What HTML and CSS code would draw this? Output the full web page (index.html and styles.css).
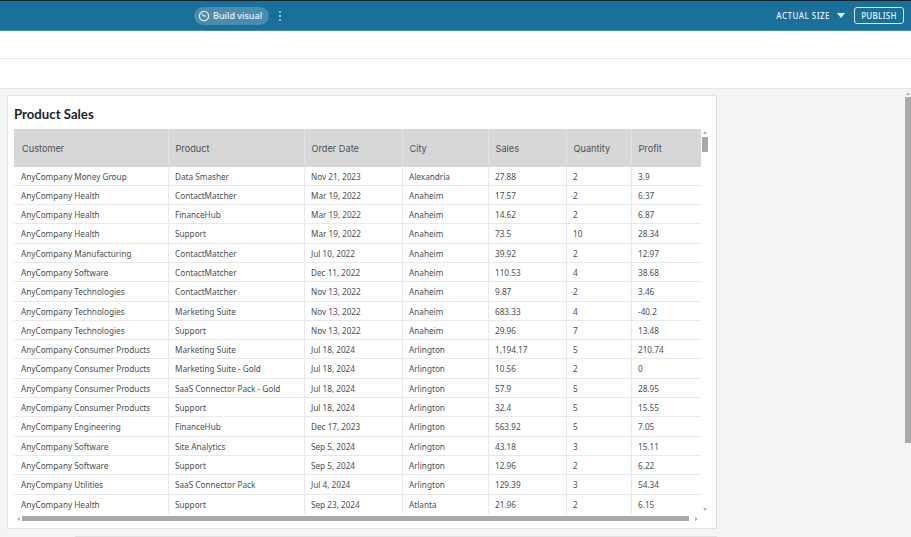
FILE: index.html
```html
<!DOCTYPE html>
<html lang="en">
<head>
<meta charset="utf-8">
<title>Product Sales</title>
<link rel="stylesheet" href="styles.css">
</head>
<body>
<header class="topbar">
  <div class="topbar-center">
    <button class="build-btn">
      <svg class="build-icon" viewBox="0 0 12 12" width="12" height="12"><circle cx="6" cy="6" r="4.6" fill="none" stroke="#e6f1f6" stroke-width="1.3"/><path d="M3.6 3.6 L6.2 6.2 L8 6" fill="none" stroke="#e6f1f6" stroke-width="1.2"/></svg>
      <span>Build visual</span>
    </button>
    <svg class="kebab" viewBox="0 0 4 12" width="4" height="12"><circle cx="2" cy="2" r="1" fill="#b9d6e3"/><circle cx="2" cy="6" r="1" fill="#b9d6e3"/><circle cx="2" cy="10" r="1" fill="#b9d6e3"/></svg>
  </div>
  <div class="topbar-right">
    <span class="size-label">ACTUAL SIZE</span>
    <svg class="caret" viewBox="0 0 8 5" width="8" height="5"><path d="M0 0H8L4 5Z" fill="#eef5f8"/></svg>
    <button class="publish">PUBLISH</button>
  </div>
</header>
<div class="band band-one"></div>
<div class="band band-two"></div>
<main class="canvas">
  <section class="card">
    <h1 class="title">Product Sales</h1>
    <div class="table">
      <div class="row head"><div>Customer</div><div>Product</div><div>Order Date</div><div>City</div><div>Sales</div><div>Quantity</div><div>Profit</div></div>
      <div class="row"><div>AnyCompany Money Group</div><div>Data Smasher</div><div>Nov 21, 2023</div><div>Alexandria</div><div>27.88</div><div>2</div><div>3.9</div></div>
      <div class="row"><div>AnyCompany Health</div><div>ContactMatcher</div><div>Mar 19, 2022</div><div>Anaheim</div><div>17.57</div><div>2</div><div>6.37</div></div>
      <div class="row"><div>AnyCompany Health</div><div>FinanceHub</div><div>Mar 19, 2022</div><div>Anaheim</div><div>14.62</div><div>2</div><div>6.87</div></div>
      <div class="row"><div>AnyCompany Health</div><div>Support</div><div>Mar 19, 2022</div><div>Anaheim</div><div>73.5</div><div>10</div><div>28.34</div></div>
      <div class="row"><div>AnyCompany Manufacturing</div><div>ContactMatcher</div><div>Jul 10, 2022</div><div>Anaheim</div><div>39.92</div><div>2</div><div>12.97</div></div>
      <div class="row"><div>AnyCompany Software</div><div>ContactMatcher</div><div>Dec 11, 2022</div><div>Anaheim</div><div>110.53</div><div>4</div><div>38.68</div></div>
      <div class="row"><div>AnyCompany Technologies</div><div>ContactMatcher</div><div>Nov 13, 2022</div><div>Anaheim</div><div>9.87</div><div>2</div><div>3.46</div></div>
      <div class="row"><div>AnyCompany Technologies</div><div>Marketing Suite</div><div>Nov 13, 2022</div><div>Anaheim</div><div>683.33</div><div>4</div><div>-40.2</div></div>
      <div class="row"><div>AnyCompany Technologies</div><div>Support</div><div>Nov 13, 2022</div><div>Anaheim</div><div>29.96</div><div>7</div><div>13.48</div></div>
      <div class="row"><div>AnyCompany Consumer Products</div><div>Marketing Suite</div><div>Jul 18, 2024</div><div>Arlington</div><div>1,194.17</div><div>5</div><div>210.74</div></div>
      <div class="row"><div>AnyCompany Consumer Products</div><div>Marketing Suite - Gold</div><div>Jul 18, 2024</div><div>Arlington</div><div>10.56</div><div>2</div><div>0</div></div>
      <div class="row"><div>AnyCompany Consumer Products</div><div>SaaS Connector Pack - Gold</div><div>Jul 18, 2024</div><div>Arlington</div><div>57.9</div><div>5</div><div>28.95</div></div>
      <div class="row"><div>AnyCompany Consumer Products</div><div>Support</div><div>Jul 18, 2024</div><div>Arlington</div><div>32.4</div><div>5</div><div>15.55</div></div>
      <div class="row"><div>AnyCompany Engineering</div><div>FinanceHub</div><div>Dec 17, 2023</div><div>Arlington</div><div>563.92</div><div>5</div><div>7.05</div></div>
      <div class="row"><div>AnyCompany Software</div><div>Site Analytics</div><div>Sep 5, 2024</div><div>Arlington</div><div>43.18</div><div>3</div><div>15.11</div></div>
      <div class="row"><div>AnyCompany Software</div><div>Support</div><div>Sep 5, 2024</div><div>Arlington</div><div>12.96</div><div>2</div><div>6.22</div></div>
      <div class="row"><div>AnyCompany Utilities</div><div>SaaS Connector Pack</div><div>Jul 4, 2024</div><div>Arlington</div><div>129.39</div><div>3</div><div>54.34</div></div>
      <div class="row last"><div>AnyCompany Health</div><div>Support</div><div>Sep 23, 2024</div><div>Atlanta</div><div>21.96</div><div>2</div><div>6.15</div></div>
    </div>
    <div class="vscroll"><i class="arrow-up"></i><b></b><i class="arrow-down"></i></div>
    <div class="hscroll"><i class="arrow-left"></i><b></b><i class="arrow-right"></i></div>
  </section>
  <div class="next-card"></div>
  <div class="page-scroll"><i class="arrow-up"></i><b></b></div>
</main>
</body>
</html>
```
FILE: styles.css
```css
* { box-sizing: border-box; }
html, body { margin: 0; height: 100%; }
body {
  width: 911px;
  height: 537px;
  overflow: hidden;
  background: #f4f4f6;
  font-family: "Noto Sans", sans-serif;
  display: flex;
  flex-direction: column;
}
.topbar {
  flex: none;
  height: 31px;
  background: #19719b;
  border-top: 1px solid #14222c;
  border-bottom: 1px solid #3f8fb3;
  display: flex;
  align-items: center;
  justify-content: space-between;
  padding: 0 7px 0 194px;
  color: #eef5f8;
}
.topbar-center, .topbar-right { display: flex; align-items: center; }
.build-btn {
  height: 18px;
  width: 75px;
  padding: 0 0 0 4px;
  display: flex;
  align-items: center;
  gap: 3px;
  border: 0;
  border-radius: 9px;
  background: #4a8cad;
  color: #eef5f8;
  font: 500 9px "Noto Sans", sans-serif;
}
.kebab { margin-left: 9px; }
.size-label { font: 500 8px "Noto Sans", sans-serif; letter-spacing: .48px; }
.caret { margin: 0 9px 0 7px; }
.publish {
  width: 50px;
  height: 17px;
  padding: 0;
  border: 1px solid #d5e6ee;
  border-radius: 3px;
  background: transparent;
  color: #eef5f8;
  font: 500 8px "Noto Sans", sans-serif;
  letter-spacing: .3px;
}
.band { flex: none; background: #fff; border-bottom: 1px solid #e6e6e9; }
.band-one { height: 28px; }
.band-two { height: 30px; }
.canvas {
  flex: 1;
  position: relative;
  padding: 6px 0 0 7px;
  min-height: 0;
}
.card {
  position: relative;
  width: 710px;
  height: 434px;
  background: #fff;
  border: 1px solid #e2e2e5;
  padding: 0 0 0 6px;
}
.title {
  margin: 0;
  height: 33px;
  padding: 10px 0 0 0;
  font: 700 13.2px/17px Lato, sans-serif;
  color: #1b2530;
}
.table { width: 687px; height: 387px; overflow: hidden; }
.row {
  display: grid;
  grid-template-columns: 154px 136px 98px 86px 78px 65px 70px;
  height: 19.3px;
  border-bottom: 1px solid #e9e9ec;
  font-size: 8.2px;
  line-height: 19.4px;
  color: #4b4f55;
}
.row > div {
  padding-left: 6px;
  border-left: 1px solid #e9e9ec;
  white-space: nowrap;
  overflow: hidden;
}
.row > div:first-child { border-left: 0; padding-left: 7px; }
.row.last { border-bottom: 0; }
.row.head {
  height: 37.5px;
  background: #d7d7d8;
  border-bottom: 0;
  font-family: Inter, sans-serif;
  font-size: 9.2px;
  line-height: 39.5px;
  color: #4d5158;
}
.row.head > div { padding-left: 6.5px; border-left-color: #e2e2e4; }
.row.head > div:first-child { padding-left: 8px; }
.vscroll {
  position: absolute;
  left: 694px;
  top: 35px;
  width: 6px;
  height: 380px;
}
.vscroll b {
  position: absolute;
  left: 0;
  top: 6px;
  width: 6px;
  height: 15px;
  background: #a9a9a9;
}
.arrow-up, .arrow-down, .arrow-left, .arrow-right {
  position: absolute;
  width: 0;
  height: 0;
  border: 2px solid transparent;
}
.arrow-up { left: 1px; top: 0; border-top: 0; border-bottom: 3px solid #b0b0b0; }
.arrow-down { left: 1px; bottom: 0; border-bottom: 0; border-top: 3px solid #b0b0b0; }
.arrow-left { left: 0; top: 1px; border-left: 0; border-right: 3px solid #b0b0b0; }
.arrow-right { right: 0; top: 1px; border-right: 0; border-left: 3px solid #b0b0b0; }
.hscroll {
  position: absolute;
  left: 9px;
  top: 420px;
  width: 681px;
  height: 6px;
}
.hscroll b {
  position: absolute;
  left: 5px;
  top: 0;
  width: 667px;
  height: 5px;
  background: #a9a9a9;
}
.next-card {
  position: absolute;
  left: 75px;
  top: 447px;
  width: 642px;
  height: 10px;
  background: #fff;
  border: 1px solid #e2e2e5;
}
.page-scroll {
  position: absolute;
  right: 0;
  top: 3px;
  width: 6px;
  height: 360px;
}
.page-scroll b {
  position: absolute;
  left: 0;
  top: 5px;
  width: 6px;
  height: 346px;
  background: #a9a9a9;
}
```
